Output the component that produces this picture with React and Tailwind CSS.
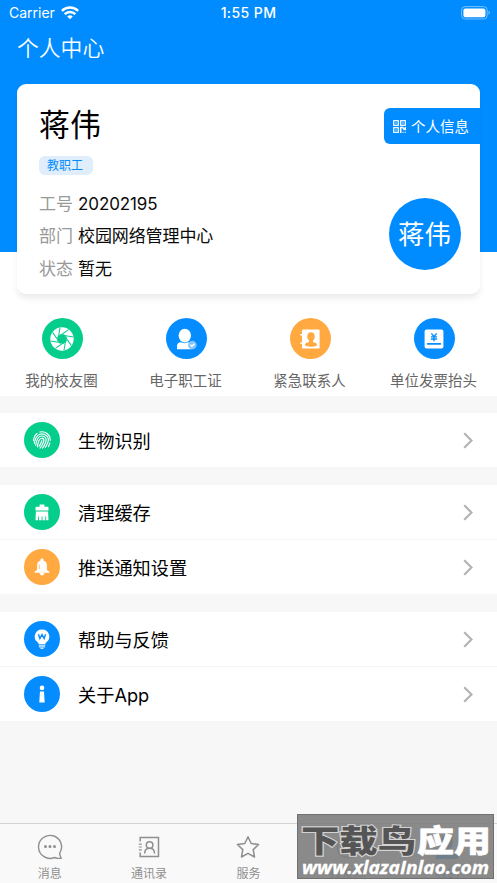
import React from 'react';

const SignalIcon = () => (
  <svg width="18" height="14" viewBox="0 0 18 14" fill="none" stroke="#fff" strokeWidth="2.5">
    <path d="M0.9 4.9a11.6 11.6 0 0 1 16.2 0" />
    <path d="M3.7 8.1a7.6 7.6 0 0 1 10.6 0" />
    <path d="M9 13.3L6.2 10.6a4 4 0 0 1 5.6 0z" fill="#fff" stroke="none" />
  </svg>
);

const BatteryIcon = () => (
  <svg width="30" height="14" viewBox="0 0 30 14" fill="none">
    <rect x="0.6" y="0.6" width="25.6" height="12.4" rx="3.6" stroke="#fff" strokeOpacity="0.45" />
    <rect x="2.4" y="2.4" width="22" height="8.8" rx="2" fill="#fff" />
    <path d="M27.6 4.8c1.6 0.6 1.6 3.4 0 4z" fill="#fff" fillOpacity="0.55" />
  </svg>
);

const QrIcon = () => (
  <svg width="13" height="13" viewBox="0 0 13 13" fill="none" stroke="#fff" strokeWidth="1.2">
    <rect x="0.7" y="0.7" width="4.6" height="4.6" />
    <rect x="7.7" y="0.7" width="4.6" height="4.6" />
    <rect x="0.7" y="7.7" width="4.6" height="4.6" />
    <path d="M2.3 3h1.4M9.300 3h1.400M2.300 10h1.400" />
    <path d="M7.700 13V7.600h2l1.600 1.900h1V7" strokeWidth="1.500" />
    <path d="M9.500 12.300h1M11.700 12.300h1" />
  </svg>
);

const ApertureIcon = () => (
  <svg width="24" height="24" viewBox="-12 -12 24 24">
    <circle r="11.7" fill="#fff" />
    <circle r="4.3" fill="#05cd8b" />
    {[10, 55, 100, 145, 190, 235, 280, 325].map((angle) => (
      <path
        key={angle}
        d="M-3 -3.9H10.8"
        stroke="#05cd8b"
        strokeWidth="1"
        transform={`rotate(${angle})`}
      />
    ))}
  </svg>
);

const StaffIcon = () => (
  <svg width="22" height="22" viewBox="0 0 22 22">
    <ellipse cx="9.8" cy="7.6" rx="6.2" ry="6.8" fill="#fff" />
    <path d="M2 21.2V18c0-2.200 1.500-3.700 3.800-3.700 2.200 1.100 5.200 1.100 7.400 0 2.200 0 3.600 1.500 3.600 3.700v3.200z" fill="#fff" />
    <circle cx="17.300" cy="17" r="4.300" fill="#85c6ff" />
    <path d="M15.300 16.800l1.600 1.500 2.600-2.600" stroke="#fff" strokeWidth="1.300" fill="none" />
  </svg>
);

const ContactIcon = () => (
  <svg width="20" height="20" viewBox="0 0 20 20">
    <rect x="2" y="0.400" width="17.600" height="19.200" rx="1.200" fill="#fff" />
    <path d="M0.200 5.800h3M0.200 14.200h3" stroke="#fff" strokeWidth="1.600" />
    <ellipse cx="11" cy="7.600" rx="3.700" ry="4.400" fill="#ffa940" />
    <path d="M9 10.600h4v2.600c2.400 0.300 4 1 4 2.400 0 1.600-3 2.200-6 2.200s-6-0.600-6-2.200c0-1.400 1.600-2.100 4-2.400z" fill="#ffa940" />
  </svg>
);

const InvoiceIcon = () => (
  <svg width="20" height="20" viewBox="0 0 20 20" fill="none" stroke="#058dff">
    <rect x="0.600" y="0.600" width="18.800" height="18.800" rx="2" fill="#fff" stroke="none" />
    <path d="M7.400 4.400L10 7.600l2.600-3.200M10 7.600v4.600M6.900 7.900h6.200M6.900 10h6.200" strokeWidth="1.400" />
    <path d="M3.600 14.900h12.800" strokeWidth="1.600" strokeLinecap="round" />
  </svg>
);

const FingerprintIcon = () => (
  <svg width="18" height="18" viewBox="-9 -9 18 18" fill="none" stroke="#fff" strokeWidth="1.150" strokeLinecap="round">
    <g transform="rotate(18)">
      <path d="M-4.500 -6.900A8.200 8.200 0 0 1 7.900 -2.200" />
      <path d="M-7.900 3.200C-8.600 0 -8.300 -2.600 -6.700 -4.700" />
      <path d="M8.300 0.300V4.300" />
      <path d="M-6.200 5.600C-7.500 -2.300 -4.300 -6 0 -6C4.300 -6 6.300 -3 6.300 0.500C6.300 3 6.100 4.500 5.500 6" />
      <path d="M-4.300 7C-5.300 2.500 -5.300 -3.900 0 -3.900C3 -3.900 4.200 -1.600 4.200 1C4.200 3.500 3.800 5.700 3 7.600" />
      <path d="M-2.200 8C-3.200 3.500 -3.300 -1.700 0 -1.700C1.600 -1.700 2.100 -0.400 2.100 1.200C2.100 4 1.500 6.200 0.600 8.300" />
      <path d="M0 0.600C0 3 -0.300 5 -0.700 6.800" />
    </g>
  </svg>
);

const BrushIcon = () => (
  <svg width="14" height="17" viewBox="0 0 14 17" fill="#fff">
    <path d="M4.600 0.400h4.800v2.300h3.400c0.400 0 0.700 0.300 0.700 0.700v3.100H0.500V3.400c0-0.400 0.300-0.700 0.700-0.700h3.400z" />
    <path d="M0.900 7.600h12.200l0.400 8.600h-2.300v-3.600h-0.900v3.600H7.500v-3.600h-0.900v3.600H3.900v-3.600H3v3.600H0.500z" />
  </svg>
);

const BellIcon = () => (
  <svg width="16" height="18" viewBox="0 0 16 18" fill="#fff">
    <path d="M8 0.500c0.900 0 1.500 0.500 1.500 1.300v0.700c2.200 0.700 3.400 2.600 3.400 4.800v4.600l2.400 1.500c0.400 0.800 0.100 1.300-0.600 1.300H1.300c-0.700 0-1-0.500-0.600-1.300l2.400-1.500V7.300c0-2.200 1.200-4.100 3.400-4.800V1.800C6.500 1 7.100 0.500 8 0.500z" />
    <path d="M5.500 14.700h5c-0.300 1.800-1.300 2.700-2.500 2.700s-2.200-0.900-2.500-2.700z" />
    <path d="M5.300 6.500v4.500" stroke="#ffa940" strokeWidth="0.700" />
  </svg>
);

const BulbIcon = () => (
  <svg width="16" height="20" viewBox="0 0 16 20">
    <path d="M8 0.400a7.200 7.200 0 0 1 4.200 13.100c-0.600 0.400-0.900 0.900-0.900 1.400H4.700c0-0.500-0.300-1-0.900-1.400A7.200 7.200 0 0 1 8 0.400z" fill="#fff" />
    <path d="M4.700 16.200h6.600M4.900 17.900h6.200M6.500 19.300h3" stroke="#fff" strokeWidth="1" />
    <path d="M4.400 5.300l1.500 4.200L8 5.600l2.100 3.900 1.500-4.200" fill="none" stroke="#058dff" strokeWidth="1.400" />
  </svg>
);

const InfoIcon = () => (
  <svg width="8" height="18" viewBox="0 0 8 18" fill="#fff">
    <circle cx="4" cy="2.900" r="2.300" />
    <path d="M2 6.500h4l0.700 11H1.300z" />
  </svg>
);

const ChevronIcon = () => (
  <svg width="10" height="17" viewBox="0 0 10 17" fill="none" stroke="#b2b2b7" strokeWidth="2.200">
    <path d="M1.200 1.200l7.300 7.300-7.300 7.300" />
  </svg>
);

const MessageTabIcon = () => (
  <svg width="26" height="26" viewBox="0 0 26 26" fill="none" stroke="#8f8f8f" strokeWidth="1.400">
    <path d="M22.600 19.300A11.500 11.500 0 1 0 17.500 23.500c2.200 0.900 4.500 1.100 6.700 0.700-1-1.600-1.400-3.300-1.600-4.900z" strokeLinejoin="round" />
    <g fill="#8f8f8f" stroke="none">
      <circle cx="8.500" cy="12.500" r="1.500" />
      <circle cx="13" cy="12.500" r="1.500" />
      <circle cx="17.500" cy="12.500" r="1.500" />
    </g>
  </svg>
);

const ContactsTabIcon = () => (
  <svg width="22" height="22" viewBox="0 0 22 22" fill="none" stroke="#8f8f8f" strokeWidth="1.500">
    <path d="M2.200 5.500V1.500h18.300v19H2.200v-4" />
    <path d="M0.800 8.200h3M0.800 11h3M0.800 13.800h3" strokeWidth="1.200" />
    <circle cx="11.600" cy="9" r="3.300" />
    <path d="M6.700 17.500c0-3 1.700-5.200 4.900-5.200s4.900 2.200 4.900 5.200" />
  </svg>
);

const StarTabIcon = () => (
  <svg width="24" height="24" viewBox="0 0 24 24" fill="none" stroke="#8f8f8f" strokeWidth="1.500" strokeLinejoin="round">
    <path d="M12 1.800l3.200 6.700 7.400 1-5.400 5.100 1.300 7.400-6.500-3.600-6.500 3.600 1.300-7.400-5.400-5.100 7.400-1z" />
  </svg>
);

const CircleTabIcon = () => (
  <svg width="24" height="24" viewBox="0 0 24 24" fill="none" stroke="#8f8f8f" strokeWidth="1.400">
    <circle cx="12" cy="12" r="10.500" />
    <circle cx="12" cy="12" r="4" />
    <path d="M10 8.500l9-3M15.500 10l3 9M14 15.500l-9 3M8.500 14l-3-9" />
  </svg>
);

const MineTabIcon = () => (
  <svg width="24" height="26" viewBox="0 0 24 26" fill="#058dff">
    <ellipse cx="12" cy="8" rx="6" ry="7.500" />
    <path d="M1 25v-3c0-3.500 3.500-5 8-6h6c4.500 1 8 2.500 8 6v3z" />
  </svg>
);

const profile = [
  { label: '工号', value: '20202195' },
  { label: '部门', value: '校园网络管理中心' },
  { label: '状态', value: '暂无' },
];

const shortcuts = [
  { label: '我的校友圈', color: 'bg-[#05cd8b]', icon: <ApertureIcon /> },
  { label: '电子职工证', color: 'bg-[#058dff]', icon: <StaffIcon /> },
  { label: '紧急联系人', color: 'bg-[#ffa940]', icon: <ContactIcon /> },
  { label: '单位发票抬头', color: 'bg-[#058dff]', icon: <InvoiceIcon /> },
];

const menuGroups = [
  [
    { label: '生物识别', color: 'bg-[#05cd8b]', icon: <FingerprintIcon /> },
  ],
  [
    { label: '清理缓存', color: 'bg-[#05cd8b]', icon: <BrushIcon /> },
    { label: '推送通知设置', color: 'bg-[#ffa940]', icon: <BellIcon /> },
  ],
  [
    { label: '帮助与反馈', color: 'bg-[#058dff]', icon: <BulbIcon /> },
    { label: '关于App', color: 'bg-[#058dff]', icon: <InfoIcon /> },
  ],
];

const tabs = [
  { label: '消息', icon: <MessageTabIcon /> },
  { label: '通讯录', icon: <ContactsTabIcon /> },
  { label: '服务', icon: <StarTabIcon /> },
  { label: '校友圈', icon: <CircleTabIcon /> },
  { label: '我的', icon: <MineTabIcon />, active: true },
];

const StatusBar = () => (
  <div className="grid h-[26px] grid-cols-3 items-center text-white">
    <div className="flex items-center gap-[6px] pl-[9px] text-[14px] leading-none">
      Carrier
      <SignalIcon />
    </div>
    <div className="text-center text-[14px] font-medium leading-none tracking-[0.4px]">1:55 PM</div>
    <div className="flex justify-end pr-[6px]">
      <BatteryIcon />
    </div>
  </div>
);

const ProfileCard = () => (
  <div className="mx-[17px] mt-[14px] flex h-[210px] justify-between rounded-[9px] bg-white pl-[22px] shadow-[0_5px_7px_-1px_rgba(0,0,0,0.09)]">
    <div>
      <h2 className="mt-[18px] h-[46px] text-[31px] leading-[46px] text-black">蒋伟</h2>
      <div className="mt-2 h-[19px] w-[54px] rounded-[6px] bg-[#e0eefb] pl-[8px] text-[12px] leading-[20px] text-[#058dff]">
        教职工
      </div>
      <dl className="mt-[13px]">
        {profile.map((item) => (
          <div key={item.label} className="flex h-[32.5px] items-center gap-[5px] text-[17px] leading-none">
            <dt className="text-[#999]">{item.label}</dt>
            <dd className="tracking-[-0.1px] text-[#0a0a0a]">{item.value}</dd>
          </div>
        ))}
      </dl>
    </div>
    <div className="flex flex-col pt-6">
      <button className="flex h-9 w-24 items-center gap-[5px] rounded-l-[6px] bg-[#008cff] pl-[9px] text-[14.5px] leading-none text-white">
        <QrIcon />
        <span className="pt-[2px]">个人信息</span>
      </button>
      <div className="ml-[5px] mt-[54px] flex h-[72px] w-[72px] items-center justify-center rounded-full bg-[#008cff] pr-[1px] pt-[1px] text-[26.5px] leading-none text-white">
        蒋伟
      </div>
    </div>
  </div>
);

const MenuRow = ({ item, divided }) => (
  <li className={divided ? 'border-t border-[#f4f4f4]' : ''}>
    <div className="flex h-[54px] items-center px-6">
      <span className={`flex h-9 w-9 items-center justify-center rounded-full ${item.color}`}>{item.icon}</span>
      <span className="ml-[18px] flex-1 pt-[2px] text-[18.2px] leading-none text-black">{item.label}</span>
      <ChevronIcon />
    </div>
  </li>
);

const TabBar = () => (
  <nav className="mt-auto grid h-[60px] grid-cols-5 border-t border-[#d4d4d4] bg-[#f9f9f9]">
    {tabs.map((tab) => (
      <div key={tab.label} className="flex flex-col items-center pt-[9px]">
        <span className="flex h-[28px] items-center">{tab.icon}</span>
        <span className={`mt-[6px] text-[12px] leading-[14px] ${tab.active ? 'text-[#058dff]' : 'text-[#8f8f8f]'}`}>
          {tab.label}
        </span>
      </div>
    ))}
  </nav>
);

const Watermark = () => (
  <div className="absolute left-[297px] top-[814px] h-[65px] w-[197px] border border-[#707070] bg-[#7d7d7d]/90">
    <svg width="195" height="63" viewBox="0 0 195 63" className="overflow-visible font-['Noto_Sans_CJK_SC',sans-serif]">
      <g fontSize="31" fontWeight="900">
        <text x="3" y="37" textLength="115" lengthAdjust="spacingAndGlyphs" fill="#555" stroke="#d2d2d2" strokeWidth="2.200" paintOrder="stroke">下载鸟</text>
        <text x="119" y="37" textLength="74" lengthAdjust="spacingAndGlyphs" fill="#fff" stroke="#fff" strokeWidth="0.600">应用</text>
      </g>
      <text x="4" y="58.500" textLength="187" lengthAdjust="spacingAndGlyphs" fontSize="17.500" fontWeight="700" fill="#fff" stroke="#fff" strokeWidth="0.300" className="font-['Open_Sans',sans-serif] italic">www.xlazaInlao.com</text>
    </svg>
  </div>
);

const App = () => {
  return (
    <div className="relative flex h-[883px] w-[497px] flex-col overflow-hidden bg-[#f7f7f7] font-['Inter','Noto_Sans_CJK_SC',sans-serif]">
      {/* Header and profile */}
      <header className="h-[396px] shrink-0 bg-[linear-gradient(#008cff_252px,#fff_252px)]">
        <StatusBar />
        <h1 className="h-11 pl-[17px] text-[21.8px] font-[350] leading-[44px] text-white">个人中心</h1>
        <ProfileCard />
        <div className="mt-6 grid grid-cols-4 pr-[1px]">
          {shortcuts.map((item) => (
            <div key={item.label} className="flex flex-col items-center">
              <span className={`flex h-[41px] w-[41px] items-center justify-center rounded-full ${item.color}`}>
                {item.icon}
              </span>
              <span className="mt-3 pr-[1px] text-[14.5px] leading-5 text-[#666]">{item.label}</span>
            </div>
          ))}
        </div>
      </header>

      {/* Settings */}
      <main className="flex flex-col gap-[18px] pt-[17px]">
        {menuGroups.map((group) => (
          <ul key={group[0].label} className="bg-white">
            {group.map((item, index) => (
              <MenuRow key={item.label} item={item} divided={index > 0} />
            ))}
          </ul>
        ))}
      </main>

      <TabBar />
      <Watermark />
    </div>
  );
};

export default App;
